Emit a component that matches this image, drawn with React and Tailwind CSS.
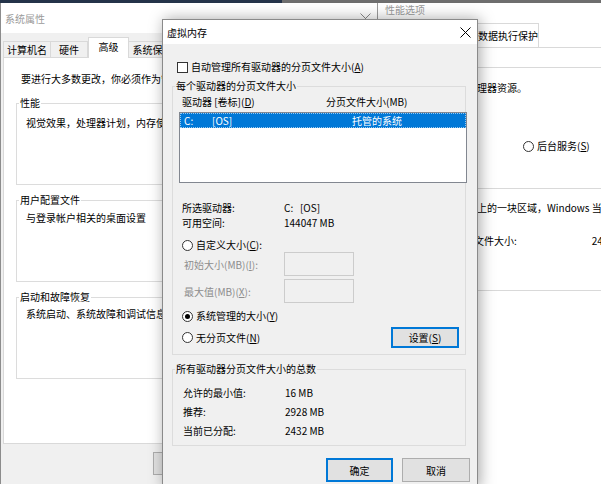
import React from 'react';

const CloseIcon = ({ color = '#000' }) => (
  <svg width="11" height="11" viewBox="0 0 11 11">
    <path d="M0.5 0.5 L10.5 10.5 M10.5 0.5 L0.5 10.5" stroke={color} strokeWidth="1" />
  </svg>
);

const Radio = ({ checked }) => (
  <span className="flex h-[11px] w-[11px] shrink-0 items-center justify-center rounded-full border border-[#333] bg-white">
    {checked && <span className="h-[5px] w-[5px] rounded-full bg-black" />}
  </span>
);

const Button = ({ children, primary, className = '' }) => (
  <div
    className={`flex items-center justify-center bg-[#e1e1e1] ${
      primary ? 'border-2 border-[#0078d7]' : 'border border-[#adadad]'
    } ${className}`}
  >
    {children}
  </div>
);

const GroupBox = ({ title, className = '', children }) => (
  <fieldset className={`border border-[#dcdcdc] ${className}`}>
    <legend className="ml-[2px] px-[1px] leading-[14px]">{title}</legend>
    {children}
  </fieldset>
);

// system properties window, behind on the left
const SystemProperties = () => (
  <div className="absolute left-0 top-[3px] h-[481px] w-[377px] border-l border-[#8c8c8c] bg-[#f0f0f0]">
    <div className="flex h-[30px] items-center justify-between bg-white pl-[4px] pr-[6px] text-[#9a9a9a]">
      <span>系统属性</span>
      <CloseIcon color="#8a8a8a" />
    </div>
    <div className="ml-[2px] mt-[4px] flex h-[20px] items-end">
      <div className="flex h-[16px] w-[48px] items-center justify-center border border-b-0 border-[#d9d9d9]">计算机名</div>
      <div className="flex h-[16px] w-[37px] items-center justify-center border border-b-0 border-l-0 border-[#d9d9d9]">硬件</div>
      <div className="relative z-10 -mb-px flex h-[21px] w-[41px] items-center justify-center border border-b-0 border-[#d9d9d9] bg-white pb-[3px]">高级</div>
      <div className="flex h-[16px] w-[48px] items-center justify-center border border-b-0 border-l-0 border-[#d9d9d9]">系统保护</div>
    </div>
    <div className="ml-[2px] h-[387px] w-[368px] border border-[#d9d9d9] bg-white px-[12px]">
      <div className="ml-[5px] mt-[14px] leading-[14px]">要进行大多数更改，你必须作为管理员登录。</div>
      <GroupBox title="性能" className="mt-[10px] h-[89px]">
        <div className="ml-[9px] mt-[6px] leading-[14px]">视觉效果，处理器计划，内存使用，以及虚拟内存</div>
      </GroupBox>
      <GroupBox title="用户配置文件" className="mt-[8px] h-[89px]">
        <div className="ml-[9px] mt-[4px] leading-[14px]">与登录帐户相关的桌面设置</div>
      </GroupBox>
      <GroupBox title="启动和故障恢复" className="mt-[8px] h-[89px]">
        <div className="ml-[9px] mt-[3px] leading-[14px]">系统启动、系统故障和调试信息</div>
      </GroupBox>
    </div>
    <div className="ml-[152px] mt-[8px] h-[23px] w-[70px] border border-[#adadad] bg-[#e1e1e1]" />
  </div>
);

// performance options window, behind on the right
const PerformanceOptions = () => (
  <div className="absolute left-[377px] top-[3px] h-[481px] w-[240px] border-l border-[#9a9a9a] bg-white">
    <div className="pl-[7px] leading-[14px] text-[#9a9a9a]">性能选项</div>
    <div className="ml-[40px] mt-[6px] flex h-[24px]">
      <div className="flex w-[60px] items-center justify-end border border-b-0 border-[#d9d9d9] pr-[2px]">处理器计划</div>
      <div className="flex w-[61px] items-center justify-center border border-b-0 border-l-0 border-[#d9d9d9]">数据执行保护</div>
    </div>
    <div className="border-t border-[#d9d9d9]">
      <div className="ml-[12px] mt-[19px] h-[102px] border-t border-[#d9d9d9]">
        <div className="ml-[57px] mt-[13px] whitespace-nowrap leading-[14px]">分配处理器资源。</div>
        <div className="ml-[133px] mt-[44px] flex items-center gap-[3px] leading-[14px]">
          <Radio />
          <span>
            后台服务(<span className="underline">S</span>)
          </span>
        </div>
      </div>
      <div className="ml-[12px] mt-[19px] h-[103px] border-y border-[#d9d9d9]">
        <div className="ml-[67px] mt-[12px] whitespace-nowrap leading-[14px]">硬盘上的一块区域，Windows 当作 RAM 使用。</div>
        <div className="ml-[64px] mt-[19px] flex whitespace-nowrap leading-[14px]">
          <span>分页文件大小:</span>
          <span className="ml-[75px]">2432 MB</span>
        </div>
      </div>
    </div>
  </div>
);

const VirtualMemory = () => (
  <div className="absolute left-[162px] top-[19px] h-[470px] w-[316px] border border-[#8a8a8a] bg-[#f0f0f0] shadow-[2px_0_14px_rgba(0,0,0,0.35)]">
    <div className="flex h-[24px] items-center justify-between bg-white pl-[4px] pr-[6px]">
      <span>虚拟内存</span>
      <CloseIcon />
    </div>

    <div className="ml-[14px] mt-[16px] flex items-center gap-[3px] leading-[14px]">
      <span className="h-[11px] w-[11px] border border-[#333] bg-white" />
      <span>
        自动管理所有驱动器的分页文件大小(<span className="underline">A</span>)
      </span>
    </div>

    <GroupBox title="每个驱动器的分页文件大小" className="ml-[9px] mr-[11px] mt-[5px] pb-[6px]">
      <div className="mt-[2px] flex pl-[9px] leading-[14px]">
        <span className="w-[144px]">
          驱动器 [卷标](<span className="underline">D</span>)
        </span>
        <span>分页文件大小(MB)</span>
      </div>
      <div className="ml-[6px] mr-[-2px] mt-[3px] h-[71px] border border-[#828790] bg-white">
        <div className="flex h-[15px] items-center border border-dotted border-[#99c9ef] bg-[#0078d7] pl-[3px] leading-[13px] text-white">
          <span className="w-[28px]">C:</span>
          <span className="w-[140px]">[OS]</span>
          <span>托管的系统</span>
        </div>
      </div>

      <div className="ml-[9px] mt-[17px] leading-[15px]">
        <div className="flex">
          <span className="w-[102px]">所选驱动器:</span>
          <span>C:&nbsp;&nbsp;&nbsp;[OS]</span>
        </div>
        <div className="flex">
          <span className="w-[102px]">可用空间:</span>
          <span>144047 MB</span>
        </div>
      </div>

      <div className="ml-[9px] mt-[8px] flex items-center gap-[3px] leading-[14px]">
        <Radio />
        <span>
          自定义大小(<span className="underline">C</span>):
        </span>
      </div>
      <div className="ml-[11px] flex h-[24px] items-center text-[#8d8d8d]">
        <span className="w-[100px]">
          初始大小(MB)(<span className="underline">I</span>):
        </span>
        <span className="h-[24px] w-[70px] border border-[#cccccc] bg-[#f0f0f0]" />
      </div>
      <div className="ml-[11px] mt-[3px] flex h-[24px] items-center text-[#8d8d8d]">
        <span className="w-[100px]">
          最大值(MB)(<span className="underline">X</span>):
        </span>
        <span className="h-[24px] w-[70px] border border-[#cccccc] bg-[#f0f0f0]" />
      </div>

      <div className="ml-[9px] mt-[6px] flex items-center gap-[3px] leading-[14px]">
        <Radio checked />
        <span>
          系统管理的大小(<span className="underline">Y</span>)
        </span>
      </div>
      <div className="ml-[9px] mr-[6px] mt-[4px] flex h-[21px] items-center justify-between">
        <div className="flex items-center gap-[3px] leading-[14px]">
          <Radio />
          <span>
            无分页文件(<span className="underline">N</span>)
          </span>
        </div>
        <Button primary className="h-[21px] w-[68px]">
          设置(<span className="underline">S</span>)
        </Button>
      </div>
    </GroupBox>

    <GroupBox title="所有驱动器分页文件大小的总数" className="ml-[9px] mr-[11px] mt-[7px] pb-[5px]">
      <div className="ml-[10px] mt-[7px] leading-[19px]">
        <div className="flex">
          <span className="w-[102px]">允许的最小值:</span>
          <span>16 MB</span>
        </div>
        <div className="flex">
          <span className="w-[102px]">推荐:</span>
          <span>2928 MB</span>
        </div>
        <div className="flex">
          <span className="w-[102px]">当前已分配:</span>
          <span>2432 MB</span>
        </div>
      </div>
    </GroupBox>

    <div className="mr-[7px] mt-[12px] flex justify-end gap-[9px]">
      <Button primary className="h-[24px] w-[67px]">确定</Button>
      <Button className="h-[24px] w-[68px]">取消</Button>
    </div>
  </div>
);

export default function App() {
  return (
    <div className="relative h-[484px] w-[601px] overflow-hidden bg-[#6e6e6e] font-['Noto_Sans_CJK_SC',sans-serif] text-[10px] text-black">
      <div className="flex h-[3px]">
        <div className="w-[282px] bg-[#243349]" />
        <div className="flex-1 bg-[#6e6e6e]" />
      </div>
      <SystemProperties />
      <PerformanceOptions />
      <VirtualMemory />
    </div>
  );
}
